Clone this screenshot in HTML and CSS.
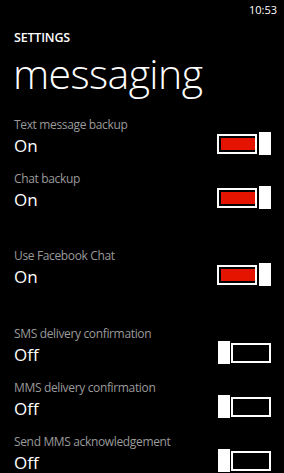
FILE: index.html
```html
<!DOCTYPE html>
<html>
<head>
<meta charset="utf-8">
<link rel="stylesheet" href="styles.css">
</head>
<body>
<div class="status"><span class="clock">10:53</span></div>
<div class="header">
  <div class="app-title">SETTINGS</div>
  <div class="page-title">messaging</div>
</div>
<div class="list">
  <div class="item">
    <div class="text"><div class="label">Text message backup</div><div class="value">On</div></div>
    <div class="toggle on"><div class="track"><div class="fill"></div></div><div class="thumb"></div></div>
  </div>
  <div class="item">
    <div class="text"><div class="label">Chat backup</div><div class="value">On</div></div>
    <div class="toggle on"><div class="track"><div class="fill"></div></div><div class="thumb"></div></div>
  </div>
  <div class="item spaced">
    <div class="text"><div class="label">Use Facebook Chat</div><div class="value">On</div></div>
    <div class="toggle on"><div class="track"><div class="fill"></div></div><div class="thumb"></div></div>
  </div>
  <div class="item">
    <div class="text"><div class="label">SMS delivery confirmation</div><div class="value">Off</div></div>
    <div class="toggle off"><div class="thumb"></div><div class="track"></div></div>
  </div>
  <div class="item">
    <div class="text"><div class="label">MMS delivery confirmation</div><div class="value">Off</div></div>
    <div class="toggle off"><div class="thumb"></div><div class="track"></div></div>
  </div>
  <div class="item">
    <div class="text"><div class="label">Send MMS acknowledgement</div><div class="value">Off</div></div>
    <div class="toggle off"><div class="thumb"></div><div class="track"></div></div>
  </div>
</div>
</body>
</html>
```
FILE: styles.css
```css
html, body {
  margin: 0;
  padding: 0;
  background: #000;
  color: #fff;
  font-family: "Open Sans", "Noto Sans", sans-serif;
  overflow: hidden;
}
.status {
  height: 20px;
  display: flex;
  justify-content: flex-end;
  padding-right: 7px;
}
.clock {
  font-size: 11px;
  line-height: 20px;
}
.header {
  padding-left: 14px;
  margin-top: 10px;
}
.app-title {
  font-size: 12.5px;
  font-weight: 600;
  line-height: 16px;
  letter-spacing: -0.2px;
}
.page-title {
  font-size: 41px;
  font-weight: 300;
  line-height: 48px;
  margin-top: 3px;
  margin-left: -1px;
  letter-spacing: -0.6px;
}
.list {
  margin-top: 20px;
  padding: 0 13px 0 14px;
}
.item {
  display: flex;
  justify-content: space-between;
  align-items: flex-end;
  height: 40px;
  margin-bottom: 14px;
}
.item.spaced {
  margin-top: 37px;
  margin-bottom: 38px;
}
.label {
  font-size: 12px;
  line-height: 16px;
  color: #9a9a9a;
  letter-spacing: -0.35px;
}
.value {
  font-size: 17px;
  line-height: 22px;
  margin-top: 2px;
}
.toggle {
  display: flex;
  align-items: center;
  gap: 1px;
  margin-bottom: 2px;
}
.toggle.on { gap: 2px; }
.track {
  box-sizing: border-box;
  width: 40px;
  height: 20px;
  border: 2px solid #fff;
  padding: 2px 0 2px 2px;
}
.fill {
  width: 100%;
  height: 100%;
  background: #e51400;
}
.thumb {
  width: 12px;
  height: 23px;
  background: #fff;
}
```
